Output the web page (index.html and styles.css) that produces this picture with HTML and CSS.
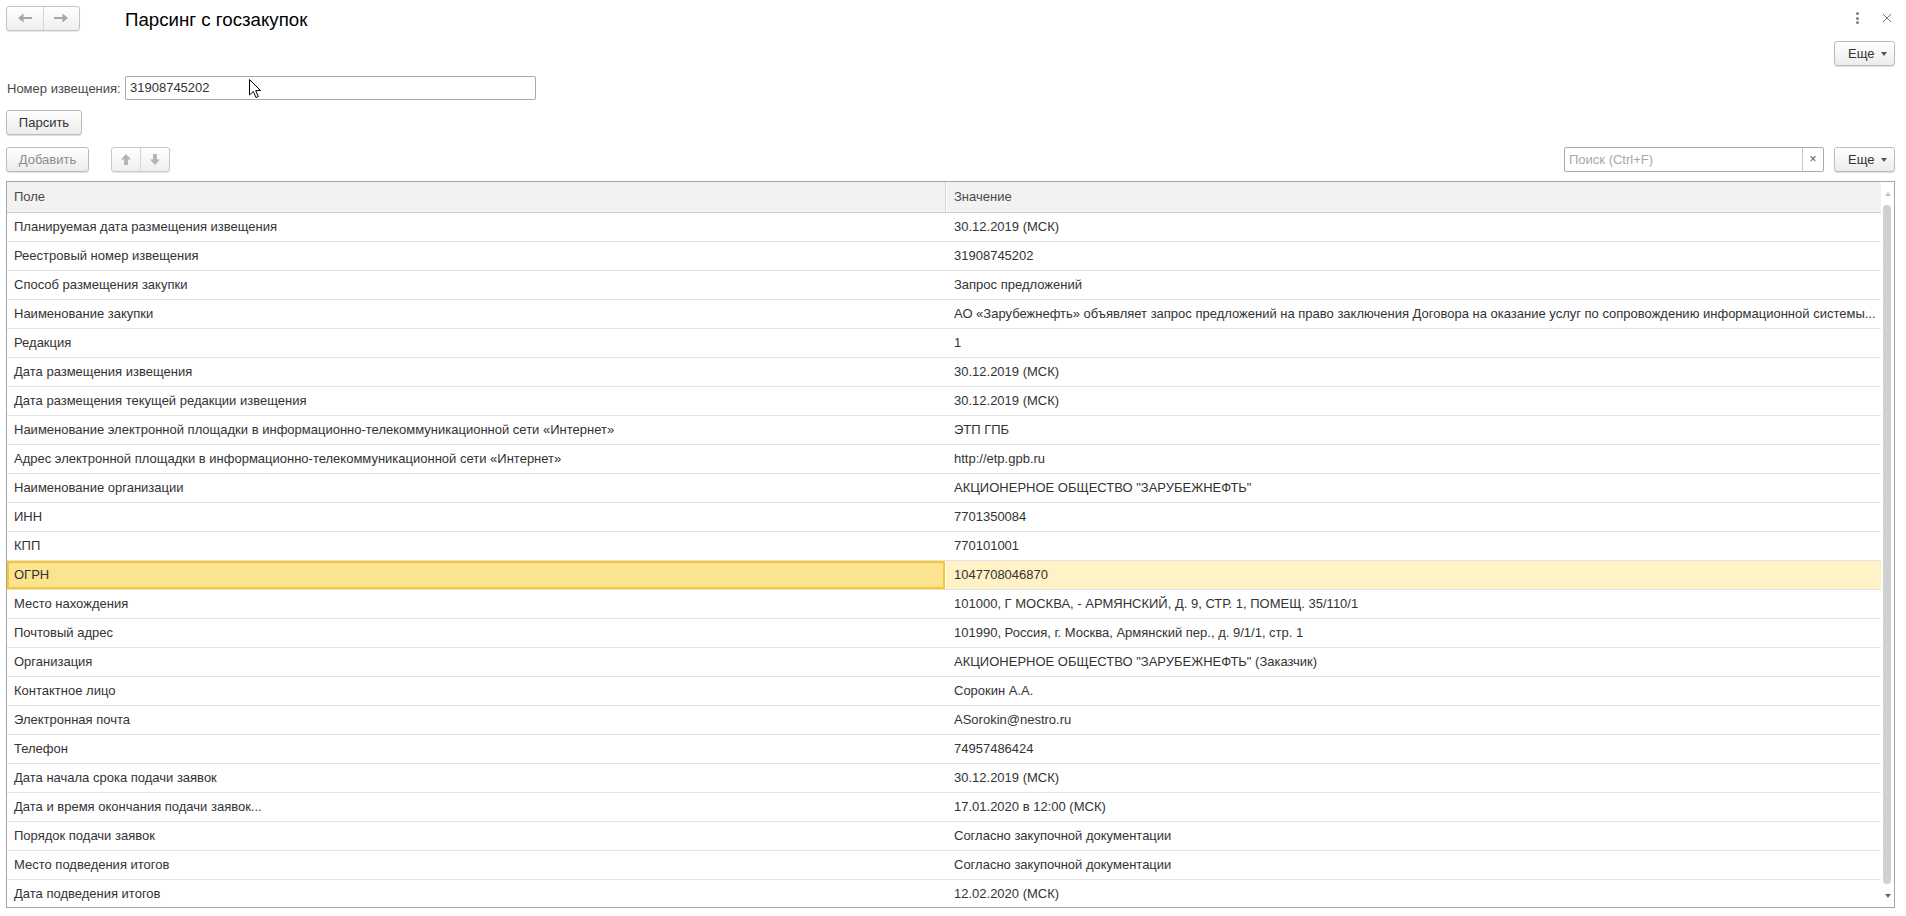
FILE: index.html
```html
<!DOCTYPE html>
<html lang="ru">
<head>
<meta charset="utf-8">
<title>Парсинг с госзакупок</title>
<link rel="stylesheet" href="styles.css">
</head>
<body>
<div class="form">
  <div class="titlebar">
    <div class="nav">
      <div class="nav-btn">
        <svg width="14" height="10" viewBox="0 0 14 10"><path d="M0 5 L5.5 0.5 L5.5 9.5 Z" fill="#a6a6a6"/><rect x="4" y="4" width="10" height="2" fill="#a6a6a6"/></svg>
      </div>
      <div class="nav-btn">
        <svg width="14" height="10" viewBox="0 0 14 10"><path d="M14 5 L8.5 0.5 L8.5 9.5 Z" fill="#a6a6a6"/><rect x="0" y="4" width="10" height="2" fill="#a6a6a6"/></svg>
      </div>
    </div>
    <div class="title">Парсинг с госзакупок</div>
    <div class="spacer"></div>
    <div class="kebab"><span></span><span></span><span></span></div>
    <div class="close">
      <svg width="10" height="10" viewBox="0 0 10 10"><path d="M1 1 L9 9 M9 1 L1 9" stroke="#7a7a7a" stroke-width="1"/></svg>
    </div>
  </div>

  <div class="top-cmd">
    <button class="btn btn-more">Еще <span class="caret"></span></button>
  </div>

  <div class="field-row">
    <label class="field-label">Номер извещения:</label>
    <div class="input">31908745202</div>
    <svg class="mouse" width="13" height="20" viewBox="0 0 13 20"><path d="M0.5 0.5 L0.5 16 L4.3 12.4 L7 18.5 L9.3 17.5 L6.7 11.5 L11.5 11.5 Z" fill="#fff" stroke="#000" stroke-width="1" stroke-linejoin="miter"/></svg>
  </div>

  <div class="btn-row">
    <button class="btn btn-parse">Парсить</button>
  </div>

  <div class="toolbar">
    <button class="btn btn-add">Добавить</button>
    <div class="updown">
      <div class="ud-btn">
        <svg width="10" height="11" viewBox="0 0 10 11"><path d="M5 0 L10 5.5 L7 5.5 L7 11 L3 11 L3 5.5 L0 5.5 Z" fill="#b4b4b4"/></svg>
      </div>
      <div class="ud-btn">
        <svg width="10" height="11" viewBox="0 0 10 11"><path d="M5 11 L10 5.5 L7 5.5 L7 0 L3 0 L3 5.5 L0 5.5 Z" fill="#b4b4b4"/></svg>
      </div>
    </div>
    <div class="spacer"></div>
    <div class="search">
      <div class="search-text">Поиск (Ctrl+F)</div>
      <div class="search-clear">×</div>
    </div>
    <button class="btn btn-more">Еще <span class="caret"></span></button>
  </div>

  <div class="grid">
    <div class="grid-main">
      <div class="grid-head">
        <div class="hcell hcell-1">Поле</div>
        <div class="hcell">Значение</div>
      </div>
      <div class="grid-body">
        <div class="row"><div class="cell c1">Планируемая дата размещения извещения</div><div class="cell c2">30.12.2019 (МСК)</div></div>
        <div class="row"><div class="cell c1">Реестровый номер извещения</div><div class="cell c2">31908745202</div></div>
        <div class="row"><div class="cell c1">Способ размещения закупки</div><div class="cell c2">Запрос предложений</div></div>
        <div class="row"><div class="cell c1">Наименование закупки</div><div class="cell c2">АО «Зарубежнефть» объявляет запрос предложений на право заключения Договора на оказание услуг по сопровождению информационной системы...</div></div>
        <div class="row"><div class="cell c1">Редакция</div><div class="cell c2">1</div></div>
        <div class="row"><div class="cell c1">Дата размещения извещения</div><div class="cell c2">30.12.2019 (МСК)</div></div>
        <div class="row"><div class="cell c1">Дата размещения текущей редакции извещения</div><div class="cell c2">30.12.2019 (МСК)</div></div>
        <div class="row"><div class="cell c1">Наименование электронной площадки в информационно-телекоммуникационной сети «Интернет»</div><div class="cell c2">ЭТП ГПБ</div></div>
        <div class="row"><div class="cell c1">Адрес электронной площадки в информационно-телекоммуникационной сети «Интернет»</div><div class="cell c2">http://etp.gpb.ru</div></div>
        <div class="row"><div class="cell c1">Наименование организации</div><div class="cell c2">АКЦИОНЕРНОЕ ОБЩЕСТВО "ЗАРУБЕЖНЕФТЬ"</div></div>
        <div class="row"><div class="cell c1">ИНН</div><div class="cell c2">7701350084</div></div>
        <div class="row"><div class="cell c1">КПП</div><div class="cell c2">770101001</div></div>
        <div class="row row-selected"><div class="cell c1">ОГРН</div><div class="cell c2">1047708046870</div></div>
        <div class="row"><div class="cell c1">Место нахождения</div><div class="cell c2">101000, Г МОСКВА, - АРМЯНСКИЙ, Д. 9, СТР. 1, ПОМЕЩ. 35/110/1</div></div>
        <div class="row"><div class="cell c1">Почтовый адрес</div><div class="cell c2">101990, Россия, г. Москва, Армянский пер., д. 9/1/1, стр. 1</div></div>
        <div class="row"><div class="cell c1">Организация</div><div class="cell c2">АКЦИОНЕРНОЕ ОБЩЕСТВО "ЗАРУБЕЖНЕФТЬ" (Заказчик)</div></div>
        <div class="row"><div class="cell c1">Контактное лицо</div><div class="cell c2">Сорокин А.А.</div></div>
        <div class="row"><div class="cell c1">Электронная почта</div><div class="cell c2">ASorokin@nestro.ru</div></div>
        <div class="row"><div class="cell c1">Телефон</div><div class="cell c2">74957486424</div></div>
        <div class="row"><div class="cell c1">Дата начала срока подачи заявок</div><div class="cell c2">30.12.2019 (МСК)</div></div>
        <div class="row"><div class="cell c1">Дата и время окончания подачи заявок...</div><div class="cell c2">17.01.2020 в 12:00 (МСК)</div></div>
        <div class="row"><div class="cell c1">Порядок подачи заявок</div><div class="cell c2">Согласно закупочной документации</div></div>
        <div class="row"><div class="cell c1">Место подведения итогов</div><div class="cell c2">Согласно закупочной документации</div></div>
        <div class="row"><div class="cell c1">Дата подведения итогов</div><div class="cell c2">12.02.2020 (МСК)</div></div>
      </div>
    </div>
    <div class="vscroll">
      <div class="arrow-box"><span class="tri-up"></span></div>
      <div class="thumb"></div>
      <div class="arrow-box"><span class="tri-down"></span></div>
    </div>
  </div>
</div>
</body>
</html>
```

FILE: styles.css
```css
* { box-sizing: border-box; }
html, body { margin: 0; padding: 0; background: #fff; }
body {
  width: 1906px;
  height: 916px;
  overflow: hidden;
  font-family: Arial, "Liberation Sans", sans-serif;
  font-size: 13px;
  color: #333;
}
.form { padding: 6px 11px 0 6px; }

.spacer { flex: 1; }

/* title bar */
.titlebar { display: flex; align-items: center; height: 24px; }
.nav {
  display: flex;
  width: 74px;
  height: 25px;
  border: 1px solid #c4c4c4;
  border-radius: 3px;
  background: linear-gradient(#ffffff, #eeeeee);
  box-shadow: 0 1px 1px rgba(0,0,0,0.10);
}
.nav-btn { flex: 1; display: flex; align-items: center; justify-content: center; }
.nav-btn + .nav-btn { border-left: 1px solid #d6d6d6; }
.title { margin-left: 45px; margin-top: 4px; font-size: 18.7px; color: #000; }
.kebab {
  width: 16px; height: 20px;
  display: flex; flex-direction: column; align-items: center; justify-content: center; gap: 1.5px;
}
.kebab span { width: 3px; height: 3px; border-radius: 50%; background: #808080; }
.close { width: 16px; height: 20px; margin-left: 14px; display: flex; align-items: center; justify-content: center; }

/* buttons */
.btn {
  height: 25px;
  border: 1px solid #bcbcbc;
  border-radius: 3px;
  background: linear-gradient(#ffffff, #ececec);
  box-shadow: 0 1px 1px rgba(0,0,0,0.13);
  font-family: Arial, "Liberation Sans", sans-serif;
  font-size: 13px;
  color: #333;
  padding: 0;
  display: inline-flex;
  align-items: center;
  justify-content: center;
}
.btn-more { width: 61px; justify-content: flex-start; padding-left: 13px; }
.caret {
  width: 0; height: 0;
  margin-left: 7px;
  border-left: 3.5px solid transparent;
  border-right: 3.5px solid transparent;
  border-top: 4px solid #555;
}
.top-cmd { display: flex; justify-content: flex-end; margin-top: 11px; height: 25px; }

/* field */
.field-row { position: relative; display: flex; align-items: center; margin-top: 10px; height: 24px; }
.field-label { width: 119px; padding-left: 1px; color: #4a4a4a; }
.input {
  width: 411px;
  height: 24px;
  border: 1px solid #a9a9a9;
  border-radius: 2px;
  padding-left: 4px;
  line-height: 22px;
  color: #333;
}
.mouse { position: absolute; left: 243px; top: 3px; }

.btn-row { margin-top: 10px; height: 25px; }
.btn-parse { width: 76px; }

/* toolbar */
.toolbar { display: flex; align-items: center; margin-top: 12px; height: 25px; }
.btn-add { width: 83px; color: #8c8c8c; }
.updown {
  display: flex;
  margin-left: 22px;
  width: 59px;
  height: 25px;
  border: 1px solid #c8c8c8;
  border-radius: 3px;
  background: linear-gradient(#ffffff, #eeeeee);
  box-shadow: 0 1px 1px rgba(0,0,0,0.10);
}
.ud-btn { flex: 1; display: flex; align-items: center; justify-content: center; }
.ud-btn + .ud-btn { border-left: 1px solid #d6d6d6; }
.search {
  display: flex;
  width: 260px;
  height: 25px;
  border: 1px solid #ababab;
  border-radius: 2px;
  margin-right: 10px;
}
.search-text { flex: 1; padding-left: 4px; line-height: 23px; color: #a8a8a8; }
.search-clear {
  width: 21px;
  border-left: 1px solid #c9c9c9;
  text-align: center;
  line-height: 22px;
  font-size: 12px;
  color: #555;
}

/* grid */
.grid {
  display: flex;
  margin-top: 9px;
  height: 727px;
  border: 1px solid #a5a5a5;
}
.grid-main { flex: 1; min-width: 0; display: flex; flex-direction: column; overflow: hidden; }
.grid-head {
  display: grid;
  grid-template-columns: 939px 1fr;
  height: 31px;
  flex: none;
  background: #f2f2f2;
  border-bottom: 1px solid #cfcfcf;
}
.hcell { padding-left: 8px; line-height: 30px; color: #4a4a4a; }
.hcell-1 { padding-left: 7px; border-right: 1px solid #d4d4d4; box-shadow: 1px 0 0 #fff; }
.grid-body { flex: 1; overflow: hidden; }
.row {
  display: grid;
  grid-template-columns: 939px 1fr;
  height: 29px;
  border-bottom: 1px solid #e3e3e3;
}
.cell {
  line-height: 28px;
  white-space: nowrap;
  overflow: hidden;
  text-overflow: ellipsis;
  color: #333;
}
.c1 { padding-left: 7px; }
.c2 { padding-left: 8px; padding-right: 4px; }
.row-selected .c1 {
  background: #fce38f;
  box-shadow: inset 0 0 0 2px #f6c530;
  margin-right: 1px;
}
.row-selected .c2 { background: #fef2c6; }

.vscroll { width: 13px; display: flex; flex-direction: column; align-items: center; }
.arrow-box { height: 23px; flex: none; display: flex; align-items: center; justify-content: center; width: 100%; }
.tri-up {
  width: 0; height: 0;
  border-left: 3.5px solid transparent;
  border-right: 3.5px solid transparent;
  border-bottom: 4px solid #c2c2c2;
}
.tri-down {
  width: 0; height: 0;
  border-left: 3.5px solid transparent;
  border-right: 3.5px solid transparent;
  border-top: 4px solid #666;
}
.thumb { flex: 1; width: 8px; margin-right: 1px; border-radius: 4px; background: #d0d0d0; }
```
